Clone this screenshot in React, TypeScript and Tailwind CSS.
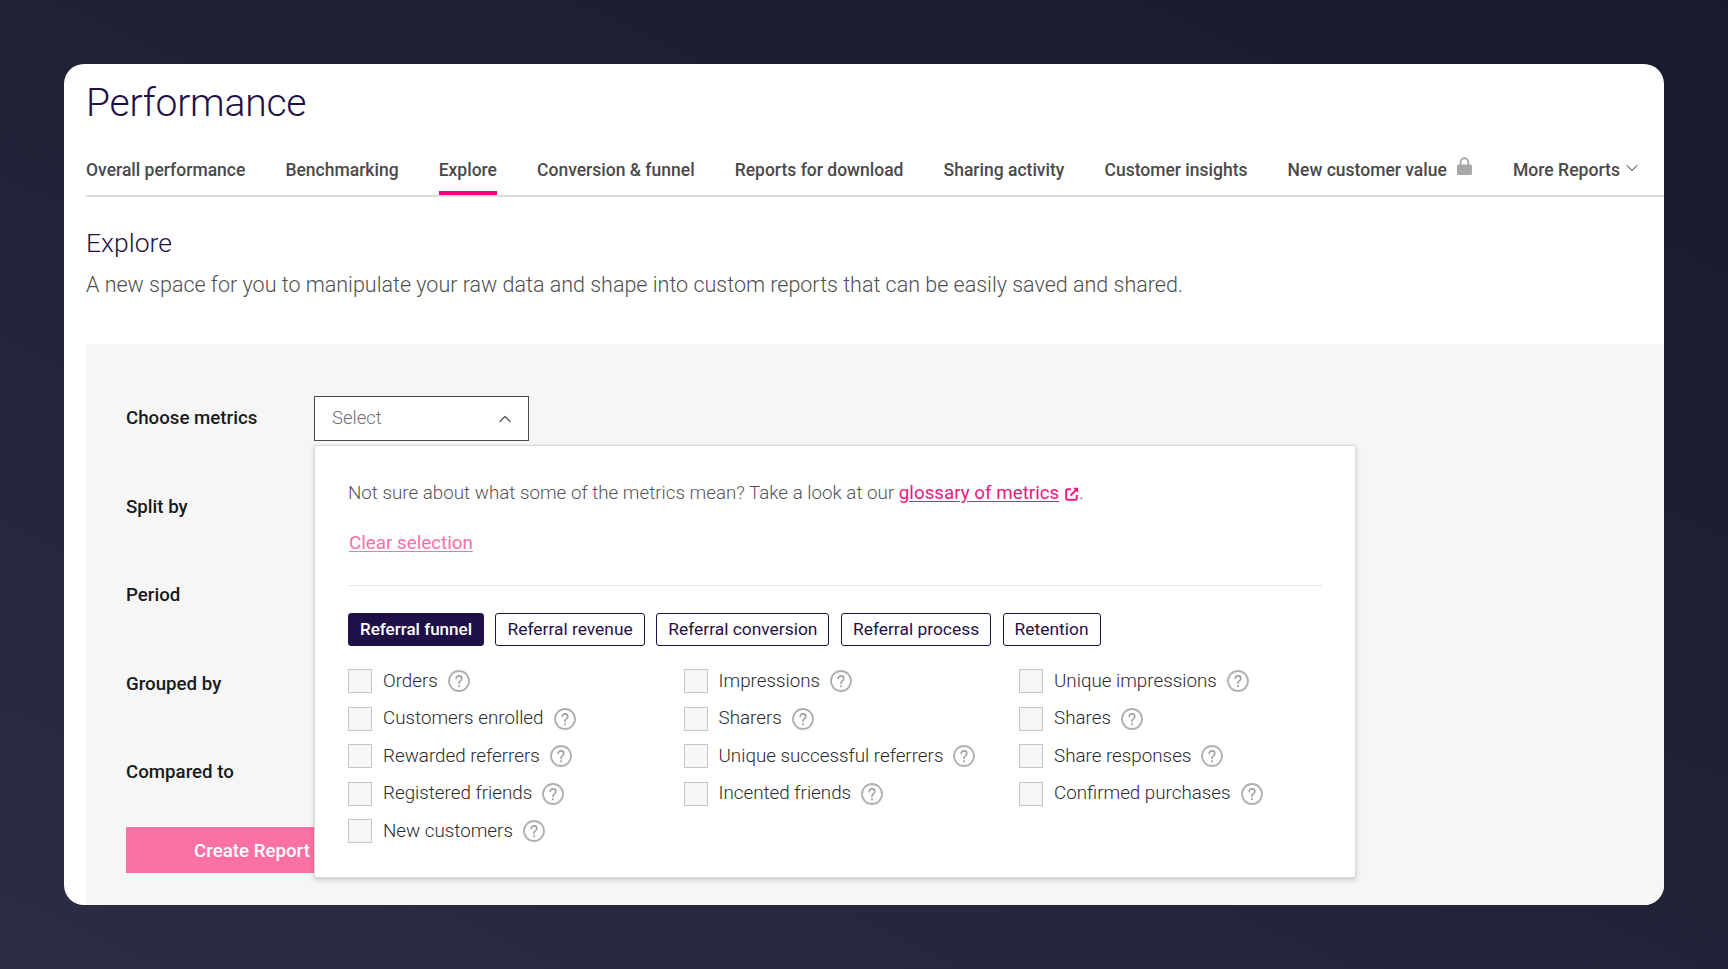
import { ChevronDown, ChevronUp } from "lucide-react";

const tabs = [
  { label: "Overall performance" },
  { label: "Benchmarking" },
  { label: "Explore", active: true },
  { label: "Conversion & funnel" },
  { label: "Reports for download" },
  { label: "Sharing activity" },
  { label: "Customer insights" },
  { label: "New customer value", locked: true },
];

const chips = ["Referral funnel", "Referral revenue", "Referral conversion", "Referral process", "Retention"];

const metricColumns = [
  ["Orders", "Customers enrolled", "Rewarded referrers", "Registered friends", "New customers"],
  ["Impressions", "Sharers", "Unique successful referrers", "Incented friends"],
  ["Unique impressions", "Shares", "Share responses", "Confirmed purchases"],
];

const formRows = ["Choose metrics", "Split by", "Period", "Grouped by", "Compared to"];

const HelpIcon = () => (
  <svg width="22" height="22" viewBox="0 0 22 22" fill="none" className="shrink-0">
    <circle cx="11" cy="11" r="10" stroke="#b0b0b0" strokeWidth="1.8" />
    <path
      d="M8.2 8.6c0-1.6 1.2-2.7 2.8-2.7s2.8 1.1 2.8 2.5c0 1.2-.7 1.8-1.5 2.4-.8.6-1.3 1.1-1.3 2.1v.5"
      stroke="#a0a0a0"
      strokeWidth="1.6"
      strokeLinecap="round"
    />
    <circle cx="11" cy="16.2" r="1.05" fill="#a0a0a0" />
  </svg>
);

const LockIcon = () => (
  <svg width="15" height="18" viewBox="0 0 15 18" fill="none" className="shrink-0">
    <path d="M3.7 8V5a3.8 3.8 0 0 1 7.6 0v3" stroke="#a8a8a8" strokeWidth="1.9" />
    <rect x="0" y="7.5" width="15" height="10.5" rx="1.5" fill="#a8a8a8" />
  </svg>
);

const ExternalIcon = () => (
  <svg width="14" height="14" viewBox="0 0 14 14" fill="none" className="inline-block ml-[6px] align-[-2px]">
    <path
      d="M6 2.2H2.6A1.4 1.4 0 0 0 1.2 3.6v7.8a1.4 1.4 0 0 0 1.4 1.4h7.8a1.4 1.4 0 0 0 1.4-1.4V8"
      stroke="#f0177f"
      strokeWidth="1.9"
    />
    <path d="M5.5 8.5 12 2" stroke="#f0177f" strokeWidth="1.9" />
    <path d="M8 .8h5.2V6z" fill="#f0177f" />
  </svg>
);

const Metric = ({ label }: { label: string }) => (
  <div className="flex items-center h-6">
    <span className="w-6 h-6 shrink-0 bg-[#f6f6f6] border border-[#c6c6c6]" />
    <span className="ml-[11px] text-[18.8px] font-light text-[#2b2b2b] whitespace-nowrap">{label}</span>
    <span className="ml-[10px] flex">
      <HelpIcon />
    </span>
  </div>
);

export default function App() {
  return (
    <div className="h-[969px] overflow-hidden p-16 font-['Roboto',sans-serif] bg-[linear-gradient(205deg,#191a2d_0%,#1f2034_40%,#2c2c44_100%)]">
      <div className="h-[841px] rounded-[20px] bg-white overflow-hidden pl-[22px]">
        <h1 className="pt-[15.5px] h-[74px] text-[39px] leading-[46px] font-light text-[#1f1147] tracking-[-0.2px]">Performance</h1>

        <nav className="mt-[8px] h-[51px] flex items-end border-b-2 border-[#dcdcdc] text-[#4a4a4a] text-[17.5px] font-medium">
          <div className="flex gap-[40.1px]">
            {tabs.map((tab) => (
              <div
                key={tab.label}
                className={`flex items-start gap-[10px] h-[49px] pt-[10.5px] whitespace-nowrap ${
                  tab.active ? "border-b-4 border-[#f0047f]" : ""
                }`}
              >
                {tab.label}
                {tab.locked && (
                  <span className="mt-[0.5px]">
                    <LockIcon />
                  </span>
                )}
              </div>
            ))}
          </div>
          <div className="ml-[41px] flex items-start gap-[2px] h-[49px] pt-[10.5px] whitespace-nowrap text-[17.6px]">
            More Reports
            <ChevronDown size={20} strokeWidth={1.25} className="mt-[1px] text-[#555]" />
          </div>
        </nav>

        <h2 className="mt-[29px] text-[26.5px] leading-[34px] font-light text-[#1f1147]">Explore</h2>
        <p className="mt-[10px] text-[21.5px] leading-[30px] font-light text-[#4f4f4f] whitespace-nowrap">
          A new space for you to manipulate your raw data and shape into custom reports that can be easily saved and
          shared.
        </p>

        <section className="mt-[44px] h-[561px] bg-[#f6f6f6] pl-10 pt-[52px]">
          <div className="relative">
            <div className="flex flex-col gap-[43.6px]">
              {formRows.map((row, i) => (
                <div key={row} className="flex items-center h-[45px]">
                  <span className="w-[188px] pb-[1px] text-[18.7px] font-medium text-[#1a1a1a]">{row}</span>
                  <div className="w-[215px] h-[45px] flex items-center justify-between pl-[17px] pr-[13px] bg-white border border-[#4a4a4a] text-[18.5px] font-light text-[#6f6f6f]">
                    {i === 0 ? "Select" : ""}
                    {i === 0 && <ChevronUp size={20} strokeWidth={1.5} className="text-[#555]" />}
                  </div>
                </div>
              ))}
            </div>

            <button className="mt-[32px] block w-[252px] h-[46px] pt-[1px] bg-[#fb70a5] text-white text-[18.7px] font-medium">
              Create Report
            </button>

            <div className="absolute left-[188px] top-[49px] w-[1042px] h-[433px] bg-white border border-[#dadada] shadow-[0_2px_5px_rgba(0,0,0,0.18)] px-[33px]">
              <p className="mt-[33px] text-[18.8px] leading-[28px] font-light text-[#555] whitespace-nowrap">
                Not sure about what some of the metrics mean? Take a look at our{" "}
                <a className="font-normal text-[#f0177f] underline underline-offset-2">glossary of metrics</a>
                <ExternalIcon />.
              </p>
              <a className="block mt-[22px] ml-[1px] text-[18.8px] leading-[28px] text-[#f871a8] underline underline-offset-2">
                Clear selection
              </a>
              <div className="mt-[28px] border-t border-[#e2e2e2]" />
              <div className="mt-[27px] flex gap-[11.5px]">
                {chips.map((chip, i) => (
                  <button
                    key={chip}
                    className={`h-[33px] rounded-[3px] border border-[#1f1147] whitespace-nowrap ${
                      i === 0
                        ? "px-[11px] bg-[#1f1147] text-white font-medium text-[17px]"
                        : "px-[11px] bg-white text-[#1f1147] text-[17.4px]"
                    }`}
                  >
                    {chip}
                  </button>
                ))}
              </div>
              <div className="mt-[23px] grid grid-cols-[335.5px_335.5px_1fr]">
                {metricColumns.map((column) => (
                  <div key={column[0]} className="flex flex-col gap-[13.5px]">
                    {column.map((metric) => (
                      <Metric key={metric} label={metric} />
                    ))}
                  </div>
                ))}
              </div>
            </div>
          </div>
        </section>
      </div>
    </div>
  );
}
